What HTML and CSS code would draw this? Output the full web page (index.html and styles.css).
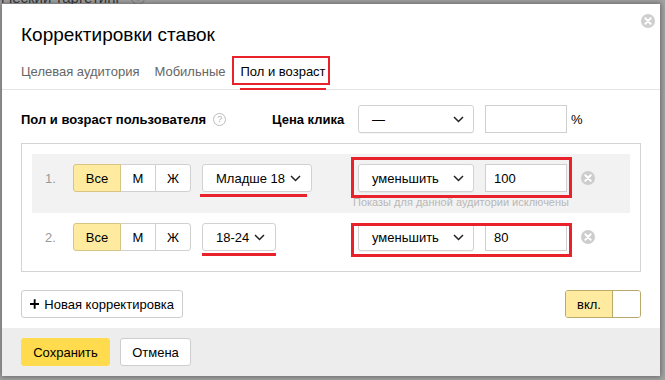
FILE: index.html
```html
<!DOCTYPE html>
<html>
<head>
<meta charset="utf-8">
<link rel="stylesheet" href="styles.css">
</head>
<body>
<div class="page-bg"><span class="bg-text">ический таргетинг</span><span class="bg-help">?</span></div>
<div class="dialog">
  <span class="dialog-close"><svg width="14" height="14" viewBox="0 0 14 14"><circle cx="7" cy="7" r="7" fill="#cfcfcf"/><path d="M4.3 4.3l5.4 5.4M9.7 4.3l-5.4 5.4" stroke="#fff" stroke-width="2" stroke-linecap="round"/></svg></span>
  <h1 class="title">Корректировки ставок</h1>
  <nav class="tabs">
    <span class="tab">Целевая аудитория</span>
    <span class="tab">Мобильные</span>
    <span class="tab tab-active">Пол и возраст<span class="mark-box"></span><span class="mark-line"></span></span>
  </nav>
  <div class="content">
    <div class="head-row">
      <div class="head-label"><span>Пол и возраст пользователя</span><span class="help">?</span></div>
      <div class="price-label">Цена клика</div>
      <div class="select"><span>—</span><svg class="chev" width="11" height="7" viewBox="0 0 11 7"><path d="M1 1l4.5 4.5L10 1" fill="none" stroke="#222" stroke-width="1.5"/></svg></div>
      <div class="input"></div>
      <span class="pct">%</span>
    </div>
    <div class="box">
      <div class="row row-first">
        <div class="row-main">
          <span class="num">1.</span>
          <div class="left">
            <div class="seg"><span class="seg-btn seg-on">Все</span><span class="seg-btn">М</span><span class="seg-btn">Ж</span></div>
            <div class="dd"><span>Младше 18</span><svg class="chev" width="11" height="7" viewBox="0 0 11 7"><path d="M1 1l4.5 4.5L10 1" fill="none" stroke="#222" stroke-width="1.5"/></svg><span class="mark-under mu-1"></span></div>
          </div>
          <div class="select"><span>уменьшить</span><svg class="chev" width="11" height="7" viewBox="0 0 11 7"><path d="M1 1l4.5 4.5L10 1" fill="none" stroke="#222" stroke-width="1.5"/></svg></div>
          <div class="input">100</div>
          <span class="row-close"><svg width="14" height="14" viewBox="0 0 14 14"><circle cx="7" cy="7" r="7" fill="#cdcdcd"/><path d="M4.3 4.3l5.4 5.4M9.7 4.3l-5.4 5.4" stroke="#fff" stroke-width="2" stroke-linecap="round"/></svg></span>
        </div>
        <div class="hint">Показы для данной аудитории исключены</div>
        <span class="mark-box2 mb-1"></span>
      </div>
      <div class="row">
        <div class="row-main">
          <span class="num">2.</span>
          <div class="left">
            <div class="seg"><span class="seg-btn seg-on">Все</span><span class="seg-btn">М</span><span class="seg-btn">Ж</span></div>
            <div class="dd"><span>18-24</span><svg class="chev" width="11" height="7" viewBox="0 0 11 7"><path d="M1 1l4.5 4.5L10 1" fill="none" stroke="#222" stroke-width="1.5"/></svg><span class="mark-under mu-2"></span></div>
          </div>
          <div class="select"><span>уменьшить</span><svg class="chev" width="11" height="7" viewBox="0 0 11 7"><path d="M1 1l4.5 4.5L10 1" fill="none" stroke="#222" stroke-width="1.5"/></svg></div>
          <div class="input">80</div>
          <span class="row-close"><svg width="14" height="14" viewBox="0 0 14 14"><circle cx="7" cy="7" r="7" fill="#cdcdcd"/><path d="M4.3 4.3l5.4 5.4M9.7 4.3l-5.4 5.4" stroke="#fff" stroke-width="2" stroke-linecap="round"/></svg></span>
        </div>
        <span class="mark-box2 mb-2"></span>
      </div>
    </div>
    <div class="actions">
      <button class="btn btn-add"><svg width="10" height="10" viewBox="0 0 10 10"><path d="M5 0v10M0 5h10" stroke="#000" stroke-width="2"/></svg><span>Новая корректировка</span></button>
      <div class="toggle"><span class="toggle-on">вкл.</span><span class="toggle-knob"></span></div>
    </div>
  </div>
  <div class="footer">
    <button class="btn btn-primary">Сохранить</button>
    <button class="btn btn-cancel">Отмена</button>
  </div>
</div>
</body>
</html>
```
FILE: styles.css
```css
* { box-sizing: border-box; }
html, body { margin: 0; }
body {
  width: 665px;
  height: 380px;
  overflow: hidden;
  position: relative;
  background: #a2a2a2;
  font-family: "Liberation Sans", Arial, sans-serif;
  font-size: 13px;
  color: #000;
}
.page-bg {
  position: absolute;
  left: -4px;
  top: -11px;
  display: flex;
  align-items: center;
  gap: 10px;
  font-size: 15px;
  color: #383838;
}
.bg-help {
  width: 14px;
  height: 14px;
  border: 1px solid #7c7c7c;
  border-radius: 50%;
  font-size: 10px;
  color: #7c7c7c;
  display: flex;
  align-items: center;
  justify-content: center;
}
.dialog {
  position: absolute;
  left: 2px;
  top: 4px;
  width: 658px;
  height: 372px;
  background: #fff;
  box-shadow: 0 0 5px 1px rgba(0, 0, 0, 0.35);
  display: flex;
  flex-direction: column;
}
.dialog-close {
  position: absolute;
  right: 5px;
  top: 10px;
  width: 14px;
  height: 14px;
  display: flex;
}
.title {
  margin: 0;
  padding: 19px 19px 0;
  font-size: 19px;
  line-height: 24px;
  font-weight: normal;
}
.tabs {
  margin-top: 16px;
  padding: 0 19px 9px;
  border-bottom: 1px solid #e5e5e5;
  display: flex;
  gap: 15px;
  line-height: 17px;
  white-space: nowrap;
}
.tab { color: #666; position: relative; }
.tab-active { color: #000; }
.mark-box {
  position: absolute;
  left: -8px;
  top: -7px;
  width: 98px;
  height: 29px;
  border: 2.5px solid #e8212b;
}
.mark-line {
  position: absolute;
  left: 0;
  right: 0;
  top: 25px;
  height: 2px;
  background: #e8212b;
}
.content { padding: 15px 19px 0; }
.head-row {
  display: flex;
  align-items: center;
  height: 28px;
}
.head-label {
  width: 251px;
  display: flex;
  align-items: center;
  gap: 7px;
  font-weight: bold;
}
.help {
  width: 13px;
  height: 13px;
  border: 1px solid #bdbdbd;
  border-radius: 50%;
  color: #b0b0b0;
  font-size: 9px;
  font-weight: normal;
  display: flex;
  align-items: center;
  justify-content: center;
}
.price-label { width: 86px; font-weight: bold; }
.select {
  width: 116px;
  height: 28px;
  border: 1px solid #d2d2d2;
  border-radius: 3px;
  box-shadow: 0 1px 0 rgba(0,0,0,0.04);
  background: #fff;
  display: flex;
  align-items: center;
  justify-content: space-between;
  padding: 0 9px 0 13px;
}
.chev { display: block; }
.input {
  width: 82px;
  height: 28px;
  margin-left: 11px;
  border: 1px solid #cfcfcf;
  background: #fff;
  padding: 0 8px;
  display: flex;
  align-items: center;
}
.pct { margin-left: 4px; }
.box {
  margin-top: 10px;
  border: 1px solid #d4d4d4;
  padding: 10px;
}
.row {
  position: relative;
  padding: 10px 0 10px 13px;
}
.row-first {
  background: #f2f2f2;
  padding-bottom: 4px;
}
.row-main {
  display: flex;
  align-items: center;
  height: 28px;
}
.num { width: 28px; color: #999; }
.left {
  width: 285px;
  display: flex;
  gap: 11px;
}
.seg { display: flex; }
.seg-btn {
  width: 36px;
  height: 28px;
  border: 1px solid #d0d0d0;
  margin-left: -1px;
  background: #fff;
  display: flex;
  align-items: center;
  justify-content: center;
}
.seg-btn:first-child { margin-left: 0; border-radius: 3px 0 0 3px; }
.seg-btn:last-child { border-radius: 0 3px 3px 0; }
.seg-on {
  width: 48px;
  background: #ffeba0;
  border-color: #d8c585;
  position: relative;
  z-index: 1;
}
.dd {
  position: relative;
  height: 28px;
  border: 1px solid #d2d2d2;
  border-radius: 3px;
  background: #fff;
  display: flex;
  align-items: center;
  gap: 5px;
  padding: 0 10px 0 13px;
  white-space: nowrap;
}
.mark-under {
  position: absolute;
  top: 29px;
  height: 2.5px;
  background: #e8212b;
}
.mu-1 { left: -3px; width: 107px; }
.mu-2 { left: -1px; width: 74px; }
.row-close {
  margin-left: 14px;
  display: flex;
}
.hint {
  margin: 4px 0 0 308px;
  font-size: 11px;
  line-height: 13px;
  color: #b8b8b8;
  white-space: nowrap;
}
.mark-box2 {
  position: absolute;
  left: 319px;
  width: 221px;
  border: 3px solid #e8212b;
}
.mb-1 { top: 3px; height: 41px; }
.mb-2 { top: 10px; height: 34px; }
.actions {
  margin-top: 18px;
  display: flex;
  justify-content: space-between;
  align-items: center;
}
.btn {
  height: 28px;
  border: 1px solid #cdcdcd;
  border-radius: 3px;
  background: #fff;
  font-family: inherit;
  font-size: 13px;
  color: #000;
  padding: 0 12px;
  display: flex;
  align-items: center;
  justify-content: center;
  white-space: nowrap;
}
.btn-add {
  width: 162px;
  padding: 0 8px;
  gap: 5px;
  justify-content: flex-start;
}
.toggle {
  width: 76px;
  height: 28px;
  border: 1px solid #b9aa6c;
  border-radius: 3px;
  display: flex;
  overflow: hidden;
}
.toggle-on {
  width: 47px;
  background: #ffeba0;
  border-right: 1px solid #b9aa6c;
  display: flex;
  align-items: center;
  justify-content: center;
}
.toggle-knob { flex: 1; background: #fff; }
.footer {
  margin-top: auto;
  height: 48px;
  background: #ededed;
  padding: 10px 19px;
  display: flex;
  gap: 10px;
}
.btn-primary {
  width: 89px;
  background: #ffdb4d;
  border-color: #ffdb4d;
}
.btn-cancel { width: 71px; }
```
